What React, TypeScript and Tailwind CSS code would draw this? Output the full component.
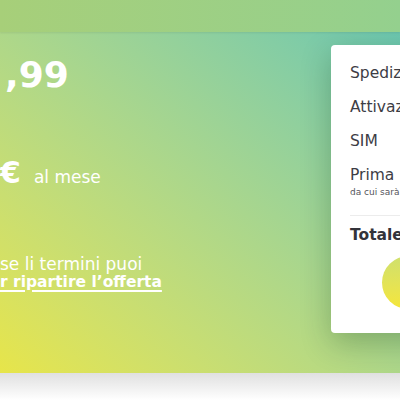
import React from "react";

const rows = ["Spedizione", "Attivazione", "SIM"];

export default function App() {
  return (
    <div
      className="h-[400px] w-[400px] overflow-hidden bg-white"
      style={{ fontFamily: '"DejaVu Sans", "Noto Sans", sans-serif' }}
    >
      <header className="relative z-10 h-[32px] bg-gradient-to-r from-[#a7cf79] to-[#94d08e] shadow-[0_1px_2px_rgba(0,0,0,0.08)]" />

      <section className="grid h-[341px] grid-cols-[331px_300px] bg-gradient-to-tr from-[#e7e549] to-[#6cc7b0]">
        <div className="flex flex-col text-white">
          <div className="mt-[25px] pl-[5px] text-[36px] font-bold leading-none">
            ,99
          </div>
          <div className="mt-[65px] flex items-baseline gap-[13px]">
            <span className="text-[30px] font-bold leading-none">€</span>
            <span className="text-[17px]">al mese</span>
          </div>
          <div className="mt-[64px] text-[17px] leading-[18px]">
            <p>se li termini puoi</p>
            <p className="font-bold text-[15.5px] underline underline-offset-[3px] decoration-[1.5px]">
              r ripartire l’offerta
            </p>
          </div>
        </div>

        <div className="mt-[13px] h-[288px] rounded-[4px] bg-white px-[19px] pt-[17px] text-[#3d3d45] shadow-[0_10px_30px_rgba(0,40,0,0.25)]">
          <div className="flex flex-col gap-[12px]">
            {rows.map((r) => (
              <div key={r} className="text-[15.5px] leading-[22px]">
                {r}
              </div>
            ))}
            <div>
              <div className="text-[15.5px] leading-[22px]">Prima ricarica</div>
              <div className="text-[9px] leading-[12px] text-[#55555c]">
                da cui sarà scalato il costo del primo mese
              </div>
            </div>
          </div>
          <div className="mt-[17px] border-t border-[#ececec]" />
          <div className="mt-[8px] text-[15.5px] font-bold leading-[22px] text-[#33333a]">
            Totale
          </div>
          <div className="ml-[32px] mt-[10px] h-[53px] w-[53px] rounded-full bg-gradient-to-b from-[#cfe06c] to-[#f5e638]" />
        </div>
      </section>

      <div className="h-[27px] bg-gradient-to-b from-[#e0e0e0] to-white" />
    </div>
  );
}
